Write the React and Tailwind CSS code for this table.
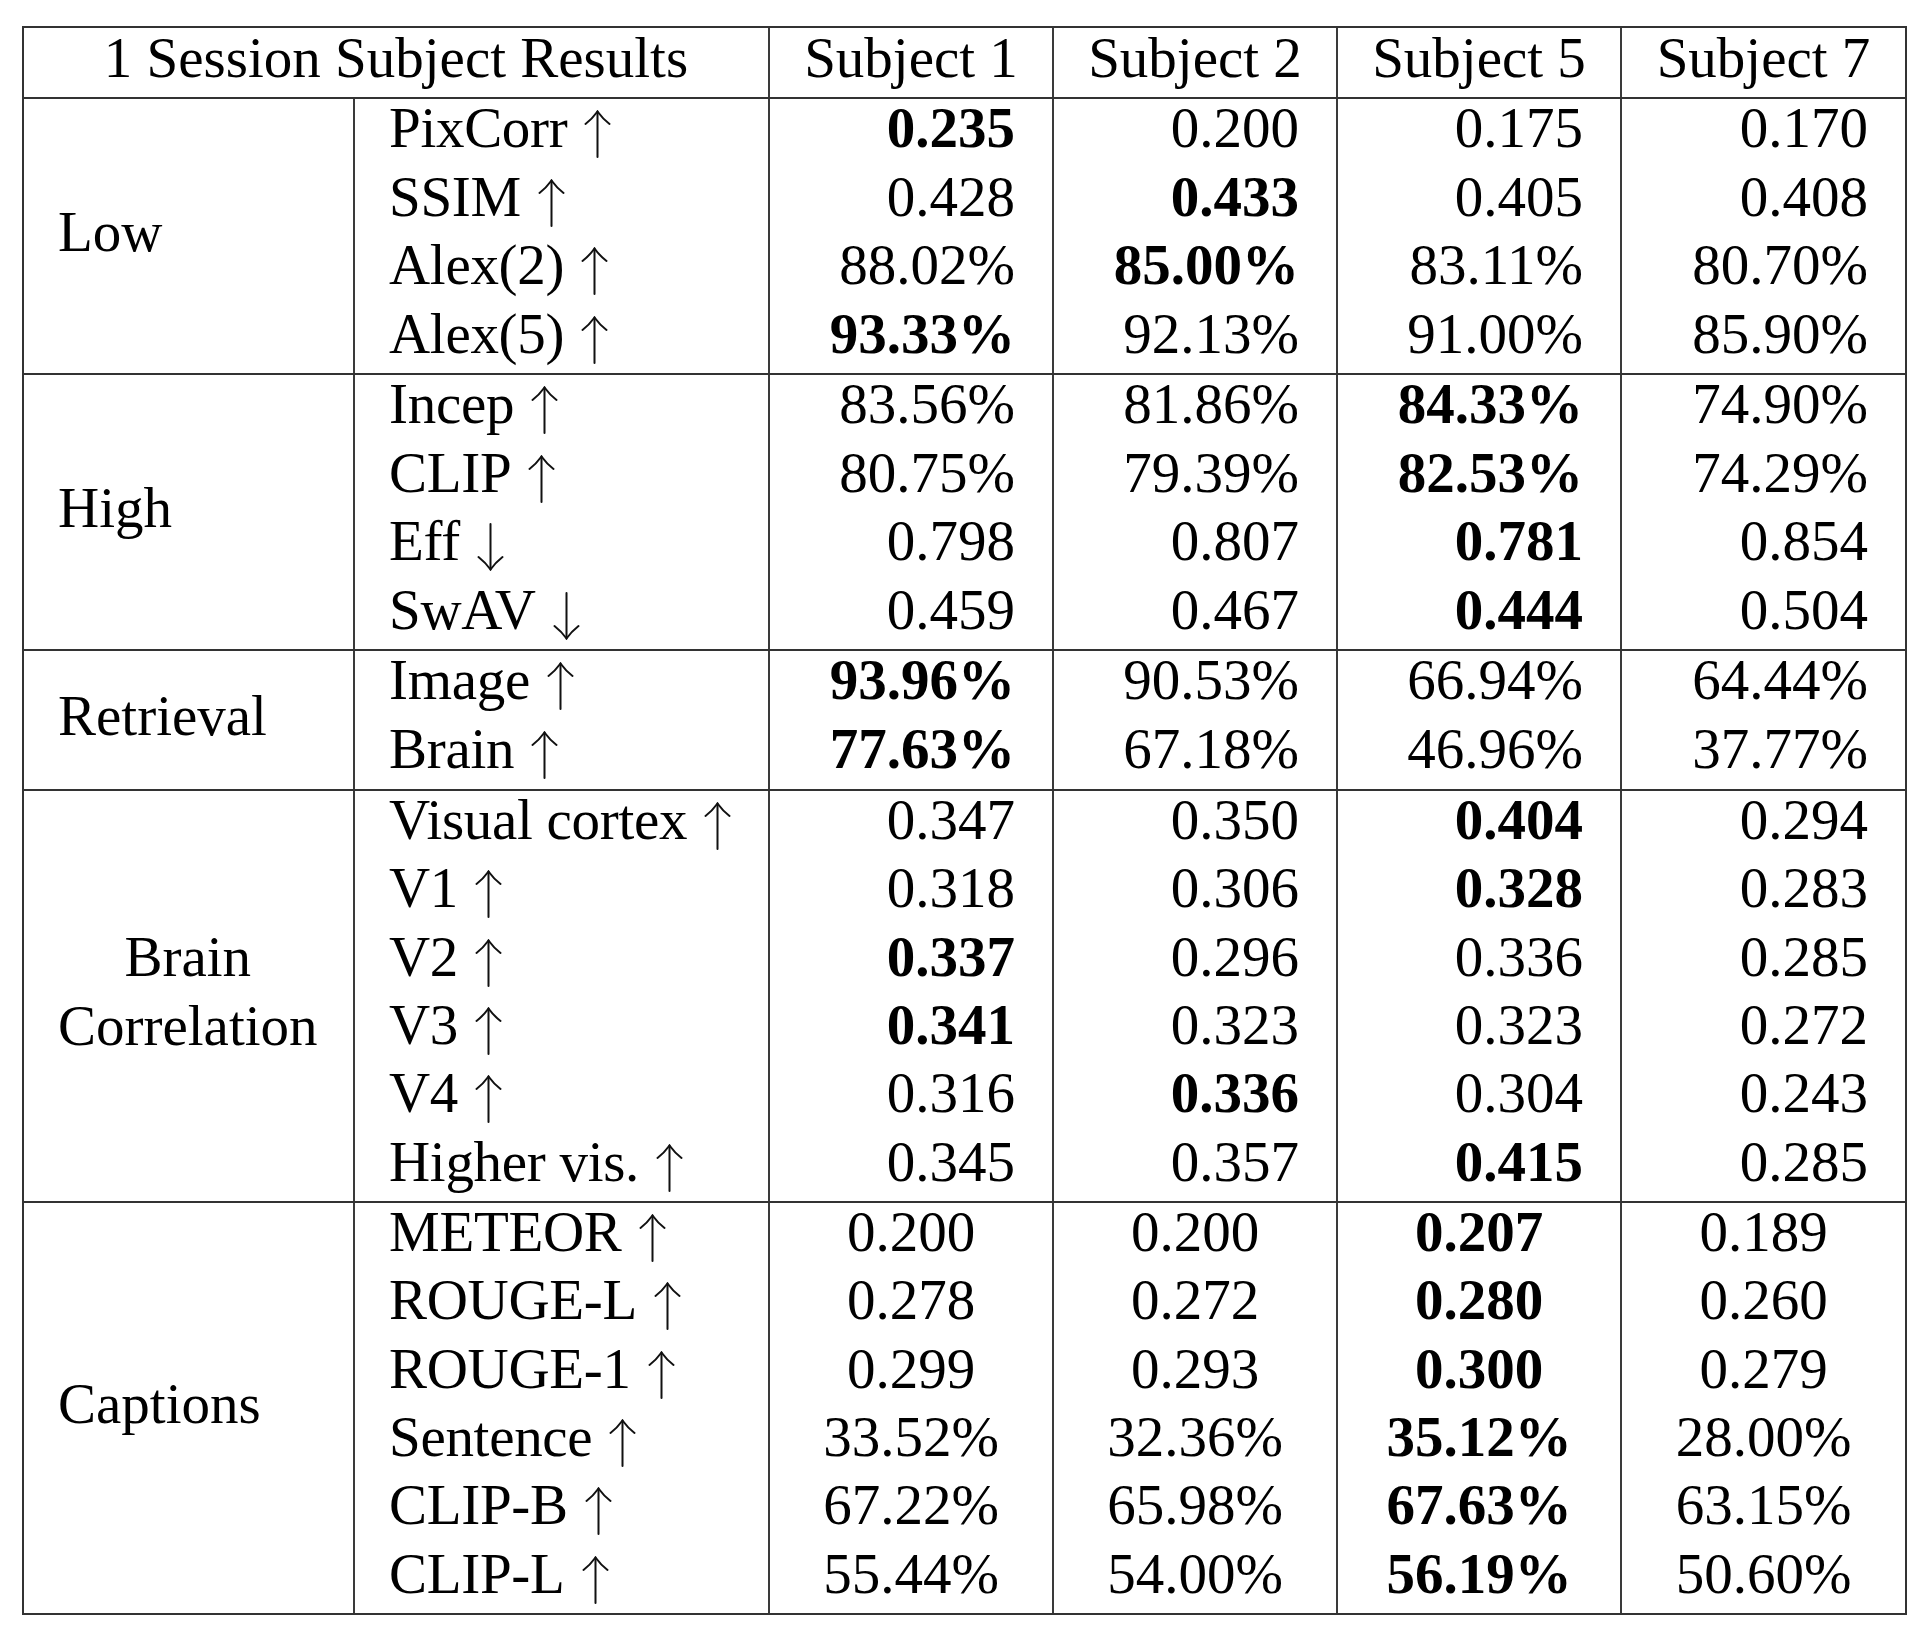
import React from "react";

// "*" in front of a value means it is the best one in its row (bold)
const sections = [
  {
    label: "Low",
    h: "h-[276px]",
    rows: [
      ["PixCorr", "up", "*0.235", "0.200", "0.175", "0.170"],
      ["SSIM", "up", "0.428", "*0.433", "0.405", "0.408"],
      ["Alex(2)", "up", "88.02%", "*85.00%", "83.11%", "80.70%"],
      ["Alex(5)", "up", "*93.33%", "92.13%", "91.00%", "85.90%"],
    ],
  },
  {
    label: "High",
    h: "h-[276px]",
    rows: [
      ["Incep", "up", "83.56%", "81.86%", "*84.33%", "74.90%"],
      ["CLIP", "up", "80.75%", "79.39%", "*82.53%", "74.29%"],
      ["Eff", "down", "0.798", "0.807", "*0.781", "0.854"],
      ["SwAV", "down", "0.459", "0.467", "*0.444", "0.504"],
    ],
  },
  {
    label: "Retrieval",
    h: "h-[140px]",
    rows: [
      ["Image", "up", "*93.96%", "90.53%", "66.94%", "64.44%"],
      ["Brain", "up", "*77.63%", "67.18%", "46.96%", "37.77%"],
    ],
  },
  {
    label: "Brain Correlation",
    h: "h-[412px]",
    rows: [
      ["Visual cortex", "up", "0.347", "0.350", "*0.404", "0.294"],
      ["V1", "up", "0.318", "0.306", "*0.328", "0.283"],
      ["V2", "up", "*0.337", "0.296", "0.336", "0.285"],
      ["V3", "up", "*0.341", "0.323", "0.323", "0.272"],
      ["V4", "up", "0.316", "*0.336", "0.304", "0.243"],
      ["Higher vis.", "up", "0.345", "0.357", "*0.415", "0.285"],
    ],
  },
  {
    label: "Captions",
    h: "h-[412px]",
    center: true,
    rows: [
      ["METEOR", "up", "0.200", "0.200", "*0.207", "0.189"],
      ["ROUGE-L", "up", "0.278", "0.272", "*0.280", "0.260"],
      ["ROUGE-1", "up", "0.299", "0.293", "*0.300", "0.279"],
      ["Sentence", "up", "33.52%", "32.36%", "*35.12%", "28.00%"],
      ["CLIP-B", "up", "67.22%", "65.98%", "*67.63%", "63.15%"],
      ["CLIP-L", "up", "55.44%", "54.00%", "*56.19%", "50.60%"],
    ],
  },
];

const subjects = ["Subject 1", "Subject 2", "Subject 5", "Subject 7"];
const colW = ["w-[284px]", "w-[284px]", "w-[284px]", "flex-1"];

// thin math-style arrow like LaTeX's \uparrow / \downarrow
function Arrow({ dir }) {
  return (
    <svg
      width="27"
      height="48"
      viewBox="0 0 27 48"
      className={`ml-[17px] inline-block align-[-11px] ${dir === "down" ? "rotate-180" : ""}`}
      fill="none"
      stroke="#111"
      strokeWidth="2"
      strokeLinecap="round"
    >
      <path d="M13.5 1.5 V47" />
      <path d="M1.5 14 Q8.5 8.5 13.5 1.5 Q18.5 8.5 25.5 14" />
    </svg>
  );
}

function Value({ v, center, w }) {
  const bold = v.startsWith("*");
  return (
    <div
      className={`${w} border-l-2 border-[#3a3a3a] ${
        center ? "text-center" : "text-right pr-[37px]"
      } ${bold ? "font-bold" : ""}`}
    >
      {bold ? v.slice(1) : v}
    </div>
  );
}

function Label({ text }) {
  if (text === "Brain Correlation") {
    return (
      <div className="inline-block text-center leading-[68.5px]">
        Brain
        <br />
        Correlation
      </div>
    );
  }
  return <div className="leading-[60px]">{text}</div>;
}

export default function App() {
  return (
    <div className="min-h-screen bg-white pl-[22px] pt-[26px] text-black font-['Liberation_Serif','Times_New_Roman',serif] text-[57px]">
      <div className="w-[1885px] border-2 border-[#333]">
        {/* header */}
        <div className="flex h-[69px] leading-[60px]">
          <div className="w-[744px] text-center">1 Session Subject Results</div>
          {subjects.map((s, i) => (
            <div key={s} className={`${colW[i]} border-l-2 border-[#3a3a3a] text-center`}>
              {s}
            </div>
          ))}
        </div>

        {sections.map((sec) => (
          <div key={sec.label} className={`flex ${sec.h} border-t-2 border-[#333]`}>
            <div className="flex w-[329px] items-center pb-[9px] pl-[34px]">
              <Label text={sec.label} />
            </div>
            <div className="flex flex-1 flex-col">
              {sec.rows.map((r) => (
                <div key={r[0]} className="flex flex-1 leading-[58px]">
                  <div className="w-[415px] border-l-2 border-[#3a3a3a] pl-[34px] whitespace-nowrap tracking-[-0.3px]">
                    {r[0]}
                    <Arrow dir={r[1]} />
                  </div>
                  {r.slice(2).map((v, i) => (
                    <Value key={i} v={v} center={sec.center} w={colW[i]} />
                  ))}
                </div>
              ))}
            </div>
          </div>
        ))}
      </div>
    </div>
  );
}
